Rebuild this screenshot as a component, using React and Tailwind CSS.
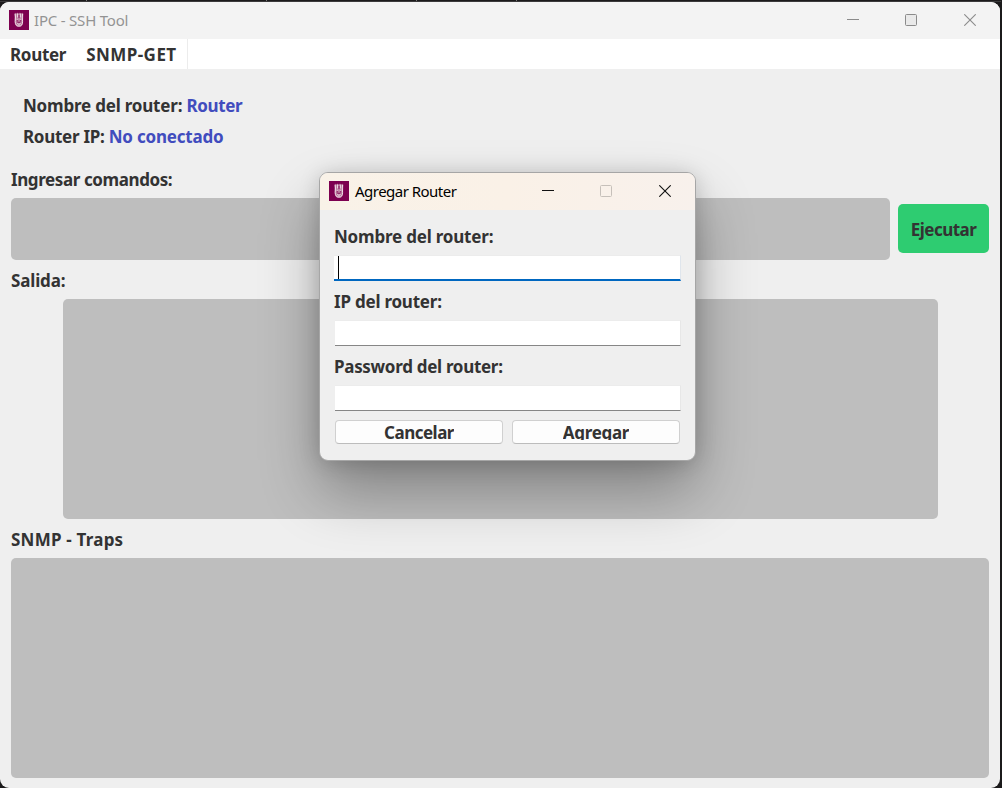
import React from "react";

const BOLD = "font-['Noto_Sans',sans-serif] font-bold text-[17px] text-[#333333] whitespace-nowrap leading-[24px]";

function Logo() {
  return (
    <svg width="20" height="20" viewBox="0 0 20 20" className="block shrink-0">
      <rect width="20" height="20" fill="#7d0050" />
      <path d="M5.500 3.500L7 2.800l.8 1 1-1.300 1 1.300 1.200-1.300.8 1.300 1.700-1 .8 1-.3 8.200c0 3-1.500 5-4 5s-4.200-2-4.200-5z" fill="#b97a9d" />
      <g fill="none" stroke="#efdde7" strokeWidth="1">
        <path d="M6.200 4l.3 3-.3 4.700c0 2.900 1.300 4.300 3.700 4.300s3.700-1.400 3.700-4.300L13.300 7l.3-3" strokeWidth="1" />
        <path d="M8.500 3.500v4M11.400 3.500v4" strokeWidth=".9" />
        <path d="M7.500 9.200h1.800M10.600 9.200h1.800" strokeWidth=".8" />
        <path d="M8.300 13.500l1.600.8 1.600-.8" />
      </g>
      <path d="M8.300 10.200v1.300M10 5v3M11.600 10.200v1.300M8.500 12.300h2.800" fill="none" stroke="#7d0050" strokeWidth=".8" />
    </svg>
  );
}

function Controls({ stroke, maxStroke, maxFill }) {
  return (
    <div className="flex items-center">
      <svg width="12" height="12" className="block">
        <path d="M0 5.500h12" stroke={stroke} />
      </svg>
      <svg width="12" height="12" className="ml-[46px] block">
        <rect x=".5" y=".5" width="11" height="11" rx="1" fill={maxFill} stroke={maxStroke} />
      </svg>
      <svg width="12" height="12" className="ml-[47px] block">
        <path d="M.3 .3l11.400 11.400M11.700 .3l-11.400 11.400" stroke={stroke} strokeWidth="1.100" />
      </svg>
    </div>
  );
}

function Field({ label, tracking, focused }) {
  return (
    <div className="h-[65px]">
      <div className={`${BOLD} ${tracking} h-[30px]`}>{label}</div>
      {focused ? (
        <div className="h-[26px] w-[347px] border-b-2 border-b-[#0067c0] border-t border-t-[#ececec] border-r border-r-[#dfe5ec] bg-white pl-[4px]">
          <div className="h-[23px] w-px bg-black" />
        </div>
      ) : (
        <div className="ml-px h-[26px] w-[346px] border-b border-b-[#868686] border-t border-t-[#ececec] border-r border-r-[#e7e7e7] bg-white" />
      )}
    </div>
  );
}

function Dialog() {
  return (
    <div className="absolute left-[319px] top-[170px] flex h-[289px] w-[377px] flex-col overflow-hidden rounded-[9px] border border-[#a6a6a6] bg-[#efefef]">
      <div className="flex h-[37px] shrink-0 items-center justify-between bg-gradient-to-r from-[#f9f2e8] via-[#faf1e7] to-[#f8f1ec] pb-px pl-[9px] pr-[24px]">
        <div className="flex items-center gap-[6px]">
          <Logo />
          <span className="font-['Noto_Sans',sans-serif] text-[15px] leading-[20px] tracking-[-0.52px] text-black">Agregar Router</span>
        </div>
        <Controls stroke="#111111" maxStroke="#c6c0ba" maxFill="none" />
      </div>
      <div className="flex flex-col pl-[14px] pt-[15px]">
        <Field label="Nombre del router:" tracking="tracking-[-0.2px]" focused />
        <Field label="IP del router:" tracking="tracking-[-0.22px]" />
        <Field label="Password del router:" tracking="tracking-[-0.3px]" />
        <div className="ml-px flex gap-[9px]">
          <button className="flex h-[24px] w-[168px] justify-center rounded-[4px] border border-[#d0d0d0] border-b-[#bcbcbc] bg-[#fdfdfd]">
            <span className={`${BOLD} block h-[19px] overflow-hidden tracking-[-0.5px]`}>Cancelar</span>
          </button>
          <button className="flex h-[24px] w-[168px] justify-center rounded-[4px] border border-[#d0d0d0] border-b-[#bcbcbc] bg-[#fdfdfd]">
            <span className={`${BOLD} block h-[19px] overflow-hidden tracking-[-0.3px]`}>Agregar</span>
          </button>
        </div>
      </div>
    </div>
  );
}

export default function App() {
  return (
    <div className="h-[788px] w-[1002px] overflow-hidden bg-[#1b1a1b] pr-px">
      <div className="flex h-[2px] border-b border-[#3b3a3b] pl-[86px]">
        <i className="h-px w-px bg-[#777]" />
        <i className="ml-[179px] h-px w-px bg-[#777]" />
        <i className="ml-[149px] h-px w-px bg-[#777]" />
        <i className="ml-[99px] h-px w-px bg-[#777]" />
      </div>
      <div className="relative h-[786px] w-[1000px] rounded-[9px] bg-[#efefef]">
        <div className="flex h-[37px] items-center justify-between rounded-t-[9px] bg-[#f3f3f3] pb-px pl-[9px] pr-[24px]">
          <div className="flex items-center gap-[5px]">
            <Logo />
            <span className="font-['Noto_Sans',sans-serif] text-[15px] leading-[20px] tracking-[-0.2px] text-[#939393]">IPC - SSH Tool</span>
          </div>
          <Controls stroke="#8b8b8b" maxStroke="#8b8b8b" maxFill="#e9e9e9" />
        </div>
        <div className="flex h-[30px] bg-white">
          <div className="flex w-[188px] gap-[20px] border-r border-[#ececec] pl-[10px] pt-[4px]">
            <span className={`${BOLD} tracking-[-0.3px]`}>Router</span>
            <span className={`${BOLD} tracking-[0.45px]`}>SNMP-GET</span>
          </div>
        </div>
        <div className="flex flex-col pl-[11px] pr-[11px] pt-[25px]">
          <div className={`${BOLD} h-[31px] pl-[12px] tracking-[-0.2px]`}>
            Nombre del router: <span className="tracking-[-0.35px] text-[#414cbe]">Router</span>
          </div>
          <div className={`${BOLD} h-[31px] pl-[12px] tracking-[-0.28px]`}>
            Router IP: <span className="tracking-[-0.2px] text-[#414cbe]">No conectado</span>
          </div>
          <div className={`${BOLD} mt-[12px] h-[28px] tracking-[-0.4px]`}>Ingresar comandos:</div>
          <div className="mt-[2px] flex h-[62px] items-center gap-[8px]">
            <div className="h-[62px] w-[879px] rounded-[5px] bg-[#bebebe]" />
            <button className="mb-px h-[49px] w-[91px] rounded-[5px] bg-[#2ecc71] pt-[3px]">
              <span className={`${BOLD} tracking-[-0.5px]`}>Ejecutar</span>
            </button>
          </div>
          <div className={`${BOLD} mt-[9px] h-[30px] tracking-[-0.15px]`}>Salida:</div>
          <div className="ml-[52px] h-[220px] w-[875px] rounded-[5px] bg-[#bebebe]" />
          <div className={`${BOLD} mt-[9px] h-[30px] tracking-[0.22px]`}>SNMP - Traps</div>
          <div className="h-[220px] w-[978px] rounded-[5px] bg-[#bebebe]" />
        </div>
        <div className="absolute left-[320px] top-[171px] h-[287px] w-[375px] rounded-[9px] shadow-[0_30px_60px_rgba(0,0,0,0.32),0_2px_21px_rgba(0,0,0,0.18)]" />
        <Dialog />
      </div>
    </div>
  );
}
